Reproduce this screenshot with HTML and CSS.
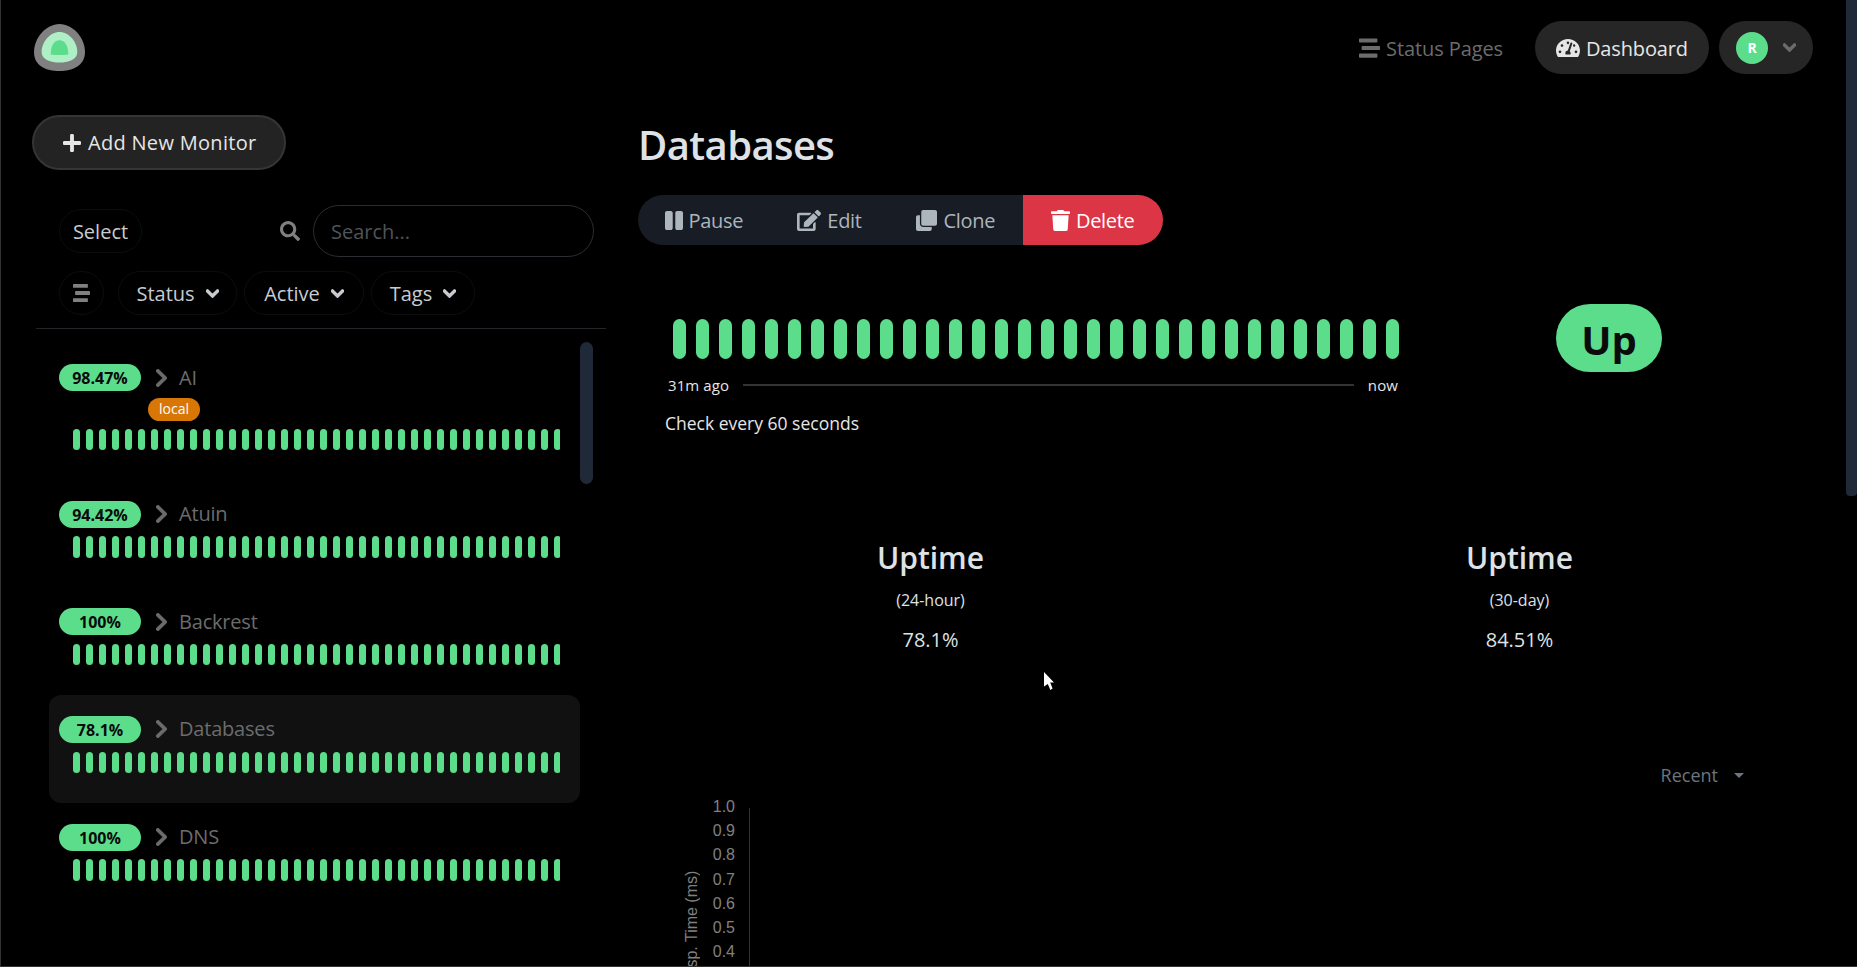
FILE: index.html
```html
<!DOCTYPE html>
<html lang="en">
<head>
    <meta charset="UTF-8">
    <meta name="viewport" content="width=device-width, initial-scale=1.0">
    <title>Databases - Uptime Kuma</title>
    <link rel="stylesheet" href="styles.css">
</head>
<body>
    <!-- Header -->
    <div class="header">
        <svg class="logo" viewBox="0 0 51 47">
            <path fill="#808080" d="M25.5 0C39 0 51 14 51 28C51 42 38 47 25.5 47C12 47 0 42 0 28C0 14 12 0 25.5 0Z"/>
            <path fill="#aeefc5" d="M25.5 8C35 8 43.3 18 43.3 28C43.3 36 34 38.5 25.5 38.5C17 38.5 7.6 36 7.6 28C7.6 18 16 8 25.5 8Z"/>
            <path fill="#5cdd8b" d="M25.5 16.3C31 16.3 34.3 22 34.3 30.5C30 31.3 21 31.3 16.7 30.5C16.7 22 20 16.3 25.5 16.3Z"/>
        </svg>
        <div class="header-links">
            <a class="status-link" href="#">
                <svg class="icon-stream" viewBox="0 0 512 512" preserveAspectRatio="none"><path d="M16 128h416c8.84 0 16-7.16 16-16V48c0-8.84-7.16-16-16-16H16C7.16 32 0 39.16 0 48v64c0 8.84 7.16 16 16 16zm480 80H80c-8.84 0-16 7.16-16 16v64c0 8.84 7.16 16 16 16h416c8.84 0 16-7.16 16-16v-64c0-8.84-7.16-16-16-16zm-64 176H16c-8.84 0-16 7.16-16 16v64c0 8.84 7.16 16 16 16h416c8.84 0 16-7.16 16-16v-64c0-8.84-7.16-16-16-16z"/></svg>
                <span class="link-text">Status Pages</span>
            </a>
            <a class="dashboard-link" href="#">
                <svg class="icon-gauge" viewBox="0 32 576 448" preserveAspectRatio="none"><path d="M288 32C128.94 32 0 160.94 0 320c0 52.8 14.25 102.26 39.06 144.8 5.61 9.62 16.3 15.2 27.44 15.2h443c11.14 0 21.83-5.58 27.44-15.2C561.75 422.26 576 372.8 576 320c0-159.06-128.94-288-288-288zm0 64c14.71 0 26.58 10.13 30.32 23.65-1.11 2.26-2.64 4.23-3.45 6.67l-9.22 27.67c-5.13 3.49-10.97 6.01-17.64 6.01-17.67 0-32-14.33-32-32S270.33 96 288 96zM96 384c-17.67 0-32-14.33-32-32s14.33-32 32-32 32 14.33 32 32-14.33 32-32 32zm48-160c-17.67 0-32-14.33-32-32s14.33-32 32-32 32 14.33 32 32-14.33 32-32 32zm246.77-72.41l-61.33 184C343.13 347.33 352 364.54 352 384c0 11.72-3.38 22.55-8.88 32H232.88c-5.5-9.45-8.88-20.28-8.88-32 0-33.94 26.5-61.43 59.9-63.59l61.34-184.01c4.17-12.56 17.73-19.45 30.36-15.17 12.57 4.19 19.35 17.79 15.17 30.36zm14.66 57.2l15.52-46.55c3.47-1.29 7.13-2.23 11.05-2.23 17.67 0 32 14.33 32 32s-14.33 32-32 32c-11.38-.01-20.89-6.28-26.57-15.22zM480 384c-17.67 0-32-14.33-32-32s14.33-32 32-32 32 14.33 32 32-14.33 32-32 32z"/></svg>
                <span class="link-text">Dashboard</span>
            </a>
            <div class="profile-pill">
                <div class="avatar">R</div>
                <svg class="icon-chevron profile-chevron" viewBox="0 100 448 310" preserveAspectRatio="none"><use href="#chevron-down"/></svg>
            </div>
        </div>
    </div>

    <div class="layout">
        <!-- Sidebar -->
        <div class="sidebar">
            <a class="add-btn" href="#">
                <svg class="icon-plus" viewBox="0 32 448 448" preserveAspectRatio="none"><path d="M416 208H272V64c0-17.67-14.33-32-32-32h-32c-17.67 0-32 14.33-32 32v144H32c-17.67 0-32 14.33-32 32v32c0 17.67 14.33 32 32 32h144v144c0 17.67 14.33 32 32 32h32c17.67 0 32-14.33 32-32V304h144c17.67 0 32-14.33 32-32v-32c0-17.67-14.33-32-32-32z"/></svg>
                Add New Monitor
            </a>

            <div class="list-panel">
                <div class="list-tools">
                    <div class="search-row">
                        <div class="pill select-pill">Select</div>
                        <div class="search-box">
                            <svg class="icon-search" viewBox="0 0 512 512" preserveAspectRatio="none"><path d="M505 442.7L405.3 343c-4.5-4.5-10.6-7-17-7H372c27.6-35.3 44-79.7 44-128C416 93.1 322.9 0 208 0S0 93.1 0 208s93.1 208 208 208c48.3 0 92.7-16.4 128-44v16.3c0 6.4 2.5 12.5 7 17l99.7 99.7c9.4 9.4 24.6 9.4 33.9 0l28.3-28.3c9.4-9.4 9.4-24.6.1-34zM208 336c-70.7 0-128-57.2-128-128 0-70.7 57.2-128 128-128 70.7 0 128 57.2 128 128 0 70.7-57.2 128-128 128z"/></svg>
                            <div class="search-input">Search...</div>
                        </div>
                    </div>
                    <div class="filter-row">
                        <div class="pill filter-toggle">
                            <svg class="icon-stream-sm" viewBox="0 32 512 448" preserveAspectRatio="none"><path d="M16 128h416c8.84 0 16-7.16 16-16V48c0-8.84-7.16-16-16-16H16C7.16 32 0 39.16 0 48v64c0 8.84 7.16 16 16 16zm480 80H80c-8.84 0-16 7.16-16 16v64c0 8.84 7.16 16 16 16h416c8.84 0 16-7.16 16-16v-64c0-8.84-7.16-16-16-16zm-64 176H16c-8.84 0-16 7.16-16 16v64c0 8.84 7.16 16 16 16h416c8.84 0 16-7.16 16-16v-64c0-8.84-7.16-16-16-16z"/></svg>
                        </div>
                        <div class="pill filter-pill filter-status">Status <svg class="icon-chevron" viewBox="0 100 448 310" preserveAspectRatio="none"><use href="#chevron-down"/></svg></div>
                        <div class="pill filter-pill filter-active">Active <svg class="icon-chevron" viewBox="0 100 448 310" preserveAspectRatio="none"><use href="#chevron-down"/></svg></div>
                        <div class="pill filter-pill filter-tags">Tags <svg class="icon-chevron" viewBox="0 100 448 310" preserveAspectRatio="none"><use href="#chevron-down"/></svg></div>
                    </div>
                </div>

                <div class="monitor-list">
                    <div class="monitor-items">
                        <div class="monitor">
                            <div class="monitor-head">
                                <span class="badge">98.47%</span>
                                <svg class="icon-right" viewBox="30 36 260 440" preserveAspectRatio="none"><use href="#chevron-right"/></svg>
                                <span class="monitor-name">AI</span>
                            </div>
                            <div class="tag-row"><span class="tag">local</span></div>
                            <div class="small-beats"></div>
                        </div>
                        <div class="monitor">
                            <div class="monitor-head">
                                <span class="badge">94.42%</span>
                                <svg class="icon-right" viewBox="30 36 260 440" preserveAspectRatio="none"><use href="#chevron-right"/></svg>
                                <span class="monitor-name">Atuin</span>
                            </div>
                            <div class="small-beats"></div>
                        </div>
                        <div class="monitor">
                            <div class="monitor-head">
                                <span class="badge">100%</span>
                                <svg class="icon-right" viewBox="30 36 260 440" preserveAspectRatio="none"><use href="#chevron-right"/></svg>
                                <span class="monitor-name">Backrest</span>
                            </div>
                            <div class="small-beats"></div>
                        </div>
                        <div class="monitor selected">
                            <div class="monitor-head">
                                <span class="badge">78.1%</span>
                                <svg class="icon-right" viewBox="30 36 260 440" preserveAspectRatio="none"><use href="#chevron-right"/></svg>
                                <span class="monitor-name">Databases</span>
                            </div>
                            <div class="small-beats"></div>
                        </div>
                        <div class="monitor">
                            <div class="monitor-head">
                                <span class="badge">100%</span>
                                <svg class="icon-right" viewBox="30 36 260 440" preserveAspectRatio="none"><use href="#chevron-right"/></svg>
                                <span class="monitor-name">DNS</span>
                            </div>
                            <div class="small-beats"></div>
                        </div>
                    </div>
                    <div class="list-scroll"></div>
                </div>
            </div>
        </div>

        <!-- Monitor details -->
        <div class="details">
            <h1 class="title">Databases</h1>

            <div class="actions">
                <a class="action action-pause" href="#">
                    <svg class="icon-pause" viewBox="0 31 448 448" preserveAspectRatio="none"><path d="M144 479H48c-26.5 0-48-21.5-48-48V79c0-26.5 21.5-48 48-48h96c26.5 0 48 21.5 48 48v352c0 26.5-21.5 48-48 48zm304-48V79c0-26.5-21.5-48-48-48h-96c-26.5 0-48 21.5-48 48v352c0 26.5 21.5 48 48 48h96c26.5 0 48-21.5 48-48z"/></svg>
                    Pause
                </a>
                <a class="action action-edit" href="#">
                    <svg class="icon-edit" viewBox="0 0 576 512" preserveAspectRatio="none"><path d="M402.6 83.2l90.2 90.2c3.8 3.8 3.8 10 0 13.8L274.4 405.6l-92.8 10.3c-12.4 1.4-22.9-9.1-21.5-21.5l10.3-92.8L388.8 83.2c3.8-3.8 10-3.8 13.8 0zm162-22.9l-48.8-48.8c-15.2-15.2-39.9-15.2-55.2 0l-35.4 35.4c-3.8 3.8-3.8 10 0 13.8l90.2 90.2c3.8 3.8 10 3.8 13.8 0l35.4-35.4c15.2-15.3 15.2-40 0-55.2zM384 346.2V448H64V128h229.8c3.2 0 6.2-1.3 8.5-3.5l40-40c7.6-7.6 2.2-20.5-8.5-20.5H48C21.5 64 0 85.5 0 112v352c0 26.5 21.5 48 48 48h352c26.5 0 48-21.5 48-48V306.2c0-10.7-12.9-16-20.5-8.5l-40 40c-2.2 2.3-3.5 5.3-3.5 8.5z"/></svg>
                    Edit
                </a>
                <a class="action action-clone" href="#">
                    <svg class="icon-clone" viewBox="0 0 512 512" preserveAspectRatio="none"><path d="M464 0c26.51 0 48 21.49 48 48v288c0 26.51-21.49 48-48 48H176c-26.51 0-48-21.49-48-48V48c0-26.51 21.49-48 48-48h288M176 416c-44.112 0-80-35.888-80-80V128H48c-26.51 0-48 21.49-48 48v288c0 26.51 21.49 48 48 48h288c26.51 0 48-21.49 48-48v-48H176z"/></svg>
                    Clone
                </a>
                <a class="action action-delete" href="#">
                    <svg class="icon-trash" viewBox="0 0 448 512" preserveAspectRatio="none"><path d="M432 32H312l-9.4-18.7A24 24 0 0 0 281.1 0H166.8a23.72 23.72 0 0 0-21.4 13.3L136 32H16A16 16 0 0 0 0 48v32a16 16 0 0 0 16 16h416a16 16 0 0 0 16-16V48a16 16 0 0 0-16-16zM53.2 467a48 48 0 0 0 47.9 45h245.8a48 48 0 0 0 47.9-45L416 128H32z"/></svg>
                    Delete
                </a>
            </div>

            <div class="status-row">
                <div class="heartbeat">
                    <div class="large-beats"></div>
                    <div class="timeline">
                        <span>31m ago</span>
                        <div class="timeline-line"></div>
                        <span>now</span>
                    </div>
                    <div class="check-every">Check every 60 seconds</div>
                </div>
                <div class="up-badge">Up</div>
            </div>

            <div class="stats">
                <div class="stat">
                    <div class="stat-title">Uptime</div>
                    <div class="stat-sub">(24-hour)</div>
                    <div class="stat-value">78.1%</div>
                </div>
                <div class="stat">
                    <div class="stat-title">Uptime</div>
                    <div class="stat-sub">(30-day)</div>
                    <div class="stat-value">84.51%</div>
                </div>
            </div>

            <div class="range-row">
                <div class="range-select">Recent <span class="caret"></span></div>
            </div>

            <div class="chart">
                <div class="chart-title">Resp. Time (ms)</div>
                <div class="chart-ticks">
                    <div>1.0</div>
                    <div>0.9</div>
                    <div>0.8</div>
                    <div>0.7</div>
                    <div>0.6</div>
                    <div>0.5</div>
                    <div>0.4</div>
                </div>
                <div class="chart-axis"></div>
            </div>
        </div>
    </div>

    <!-- Page scrollbar and mouse pointer sit over the page -->
    <div class="page-scroll"></div>
    <svg class="pointer" viewBox="0 0 10 18"><path fill="#fff" d="M0 0L10 10.5H6.2L8.6 16.5L6.4 18L3.8 12L0 14.5Z"/></svg>

    <svg class="icon-defs" width="0" height="0">
        <defs>
            <path id="chevron-down" d="M207.029 381.476L12.686 187.132c-9.373-9.373-9.373-24.569 0-33.941l22.667-22.667c9.357-9.357 24.522-9.375 33.901-.04L224 284.505l154.745-154.021c9.379-9.335 24.544-9.317 33.901.04l22.667 22.667c9.373 9.373 9.373 24.569 0 33.941L240.971 381.476c-9.373 9.372-24.569 9.372-33.942 0z"/>
            <path id="chevron-right" d="M285.476 272.971L91.132 467.314c-9.373 9.373-24.569 9.373-33.941 0l-22.667-22.667c-9.357-9.357-9.375-24.522-.04-33.901L188.505 256 34.484 101.255c-9.335-9.379-9.317-24.544.04-33.901l22.667-22.667c9.373-9.373 24.569-9.373 33.941 0L285.475 239.03c9.373 9.372 9.373 24.568.001 33.941z"/>
        </defs>
    </svg>

    <script src="script.js"></script>
</body>
</html>
```

FILE: styles.css
```css
* {
    margin: 0;
    padding: 0;
    box-sizing: border-box;
    font-family: 'Open Sans', 'Noto Sans', sans-serif;
}
body {
    background-color: #000;
    color: #dee2e6;
    height: 100vh;
    overflow: hidden;
    border-left: 1px solid #333;
    border-bottom: 1px solid #333;
}
a {
    text-decoration: none;
    color: inherit;
}
svg {
    fill: currentColor;
    flex-shrink: 0;
}
.icon-defs {
    position: absolute;
}

/* Header */
.header {
    display: flex;
    justify-content: space-between;
    align-items: flex-start;
    padding: 21px 44.5px 0 33px;
}
.logo {
    width: 51px;
    height: 47px;
    margin-top: 3px;
}
.header-links {
    display: flex;
    align-items: center;
    gap: 10px;
}
.link-text {
    padding-top: 2px;
}
.status-link {
    display: flex;
    align-items: center;
    gap: 6px;
    margin-right: 22px;
    font-size: 20px;
    letter-spacing: -0.1px;
    color: #6c6c6c;
}
.icon-stream {
    width: 21px;
    height: 22px;
}
.dashboard-link {
    display: flex;
    align-items: center;
    gap: 6px;
    height: 53px;
    width: 174px;
    padding-left: 21px;
    border-radius: 27px;
    background-color: #262626;
    font-size: 20px;
    letter-spacing: -0.15px;
    color: #e6e6e6;
}
.icon-gauge {
    width: 24px;
    height: 18px;
}
.profile-pill {
    display: flex;
    align-items: center;
    height: 53px;
    width: 93.5px;
    padding-left: 17px;
    border-radius: 27px;
    background-color: #262626;
}
.avatar {
    width: 32px;
    height: 32px;
    border-radius: 50%;
    background-color: #5cdd8b;
    color: #fff;
    font-size: 14px;
    font-weight: bold;
    line-height: 32px;
    text-align: center;
}
.icon-chevron {
    width: 13px;
    height: 9px;
    stroke: currentColor;
    stroke-width: 40px;
}
.profile-chevron {
    margin-left: 15px;
    color: #6c6c6c;
}

/* Layout */
.layout {
    display: grid;
    grid-template-columns: 605px 1fr;
    column-gap: 32px;
    margin-top: 41px;
}

/* Sidebar */
.add-btn {
    display: inline-flex;
    align-items: center;
    gap: 7px;
    height: 55px;
    width: 254px;
    margin-left: 31px;
    padding-left: 29px;
    border: 2px solid #353535;
    border-radius: 28px;
    background-color: #232323;
    font-size: 20px;
    letter-spacing: 0.3px;
    color: #e6e6e6;
}
.icon-plus {
    width: 18px;
    height: 18px;
}
.list-panel {
    margin: 35px 0 0 35px;
    width: 570px;
}
.list-tools {
    padding: 0 12px 13px 23px;
    border-bottom: 1px solid #22252a;
}
.search-row {
    display: flex;
    justify-content: space-between;
    align-items: center;
}
.pill {
    display: flex;
    align-items: center;
    justify-content: center;
    height: 44px;
    border: 1px solid #0b0d10;
    border-radius: 22px;
    font-size: 20px;
    color: #c8ccd0;
}
.select-pill {
    width: 83px;
}
.search-box {
    display: flex;
    align-items: center;
    gap: 13px;
}
.icon-search {
    width: 20px;
    height: 20px;
    color: #808080;
}
.search-input {
    width: 281px;
    height: 52px;
    padding-left: 17px;
    border: 1px solid #2a2d31;
    border-radius: 26px;
    font-size: 20px;
    line-height: 51px;
    color: #4f5459;
}
.filter-row {
    display: flex;
    margin-top: 14px;
}
.filter-toggle {
    width: 45px;
    color: #808080;
}
.icon-stream-sm {
    width: 17px;
    height: 18px;
}
.filter-pill {
    gap: 11px;
}
.filter-status {
    width: 119px;
    margin-left: 14px;
}
.filter-active {
    width: 120px;
    margin-left: 7px;
}
.filter-tags {
    width: 104px;
    margin-left: 7px;
}

/* Monitor list */
.monitor-list {
    display: flex;
    align-items: flex-start;
    padding: 14px 0 0 13px;
}
.monitor-items {
    width: 531px;
}
.monitor {
    padding: 21px 20px 29.67px 10px;
    border-radius: 12px;
}
.monitor.selected {
    background-color: #111;
}
.monitor-head {
    display: flex;
    align-items: center;
    height: 27px;
}
.badge {
    width: 82px;
    height: 27px;
    border-radius: 14px;
    background-color: #5cdd8b;
    color: #0b0b0b;
    font-size: 16px;
    font-weight: bold;
    line-height: 28px;
    text-align: center;
}
.icon-right {
    width: 11px;
    height: 18px;
    margin: 0 12px 0 15px;
    color: #6c6c6c;
    stroke: currentColor;
    stroke-width: 12px;
}
.monitor-name {
    padding-bottom: 1px;
    font-size: 20px;
    letter-spacing: -0.2px;
    color: #6c6c6c;
}
.tag-row {
    display: flex;
    height: 23px;
    margin: 6px 0 0 89px;
}
.tag {
    width: 52px;
    height: 23px;
    margin-top: 1px;
    border-radius: 12px;
    background-color: #d97706;
    color: #fff;
    font-size: 14px;
    line-height: 22px;
    text-align: center;
}
.small-beats {
    display: flex;
    gap: 6.5px;
    width: 487px;
    height: 21.33px;
    margin: 8.67px 0 0 14px;
    overflow: hidden;
}
.small-beats span {
    flex: none;
    width: 6.5px;
    border-radius: 4px;
    background-color: #5cdd8b;
}
.list-scroll {
    width: 13px;
    height: 142px;
    margin-top: -1px;
    border-radius: 7px;
    background-color: #1f2937;
}

/* Details */
.title {
    margin-top: 6px;
    font-size: 40px;
    font-weight: 600;
    letter-spacing: -0.6px;
    line-height: 48px;
    color: #dee2e6;
}
.actions {
    display: inline-flex;
    height: 50px;
    margin-top: 26px;
    border-radius: 25px;
    background-color: #181c24;
    overflow: hidden;
    vertical-align: top;
}
.action {
    display: flex;
    align-items: center;
    justify-content: center;
    gap: 6px;
    font-size: 20px;
    letter-spacing: -0.3px;
    color: #adb5bd;
}
.action-pause {
    width: 132.5px;
    gap: 5px;
}
.action-edit {
    width: 118px;
}
.action-clone {
    width: 134.5px;
}
.action-delete {
    width: 139.5px;
    background-color: #dc3545;
    color: #fff;
}
.icon-pause {
    width: 18px;
    height: 19px;
}
.icon-edit {
    width: 24px;
    height: 21px;
}
.icon-clone {
    width: 21px;
    height: 21px;
}
.icon-trash {
    width: 19px;
    height: 21px;
}
.status-row {
    display: flex;
    margin-top: 59px;
}
.heartbeat {
    width: 735px;
    margin-left: 27px;
    padding-top: 15px;
}
.large-beats {
    display: flex;
    gap: 10px;
    height: 40px;
    margin-left: 8px;
}
.large-beats span {
    width: 13px;
    border-radius: 7px;
    background-color: #5cdd8b;
}
.timeline {
    display: flex;
    align-items: center;
    gap: 14px;
    height: 24px;
    margin: 14px 2px 0 3px;
    font-size: 15px;
    letter-spacing: 0.1px;
    color: #e6e6e6;
}
.timeline-line {
    flex: 1;
    height: 2px;
    background-color: #333;
}
.check-every {
    margin-top: 14px;
    font-size: 17.5px;
    line-height: 24px;
    color: #e6e6e6;
}
.up-badge {
    width: 106px;
    height: 68px;
    margin-left: 156px;
    padding-top: 2px;
    border-radius: 34px;
    background-color: #5cdd8b;
    color: #0b0b0b;
    font-size: 40px;
    font-weight: bold;
    line-height: 68px;
    text-align: center;
}
.stats {
    display: grid;
    grid-template-columns: 589px 589px;
    margin: 101px 0 0 -2px;
    text-align: center;
}
.stat-title {
    font-size: 30px;
    font-weight: 600;
    line-height: 44px;
}
.stat-sub {
    margin-top: 8px;
    font-size: 16px;
    line-height: 24px;
}
.stat-value {
    margin-top: 14px;
    font-size: 20px;
    line-height: 28px;
}
.range-row {
    display: flex;
    justify-content: flex-end;
    margin-top: 109px;
    padding-right: 113px;
}
.range-select {
    display: flex;
    align-items: center;
    gap: 16px;
    height: 24px;
    font-size: 18px;
    color: #6c757d;
}
.caret {
    width: 0;
    height: 0;
    border-left: 5px solid transparent;
    border-right: 5px solid transparent;
    border-top: 5px solid #6c757d;
}

/* Chart */
.chart {
    display: flex;
    margin: 8px 0 0 45px;
    height: 300px;
    color: #808080;
}
.chart-title {
    height: 113px;
    margin-top: 80px;
    writing-mode: vertical-rl;
    transform: rotate(180deg);
    font-family: 'Liberation Sans', sans-serif;
    font-size: 16px;
    line-height: 18px;
    white-space: nowrap;
}
.chart-ticks {
    width: 33px;
    margin-left: 1px;
    font-family: 'Liberation Sans', sans-serif;
    font-size: 16px;
    line-height: 24.2px;
    text-align: right;
}
.chart-ticks div {
    font-family: inherit;
}
.chart-axis {
    width: 1px;
    margin: 13px 0 0 14px;
    background-color: #333;
}

/* Overlays */
.page-scroll {
    position: fixed;
    top: 0;
    right: 0;
    width: 11px;
    height: 496px;
    border-radius: 0 0 4px 4px;
    background-color: #1f2937;
}
.pointer {
    position: fixed;
    left: 1044px;
    top: 672px;
    width: 10px;
    height: 18px;
}
```

FILE: script.js
```js
// Fill the heartbeat bars
function fillBeats(selector, count) {
    document.querySelectorAll(selector).forEach(function (bar) {
        for (let i = 0; i < count; i++) {
            bar.appendChild(document.createElement('span'));
        }
    });
}

fillBeats('.small-beats', 38);
fillBeats('.large-beats', 32);
```
